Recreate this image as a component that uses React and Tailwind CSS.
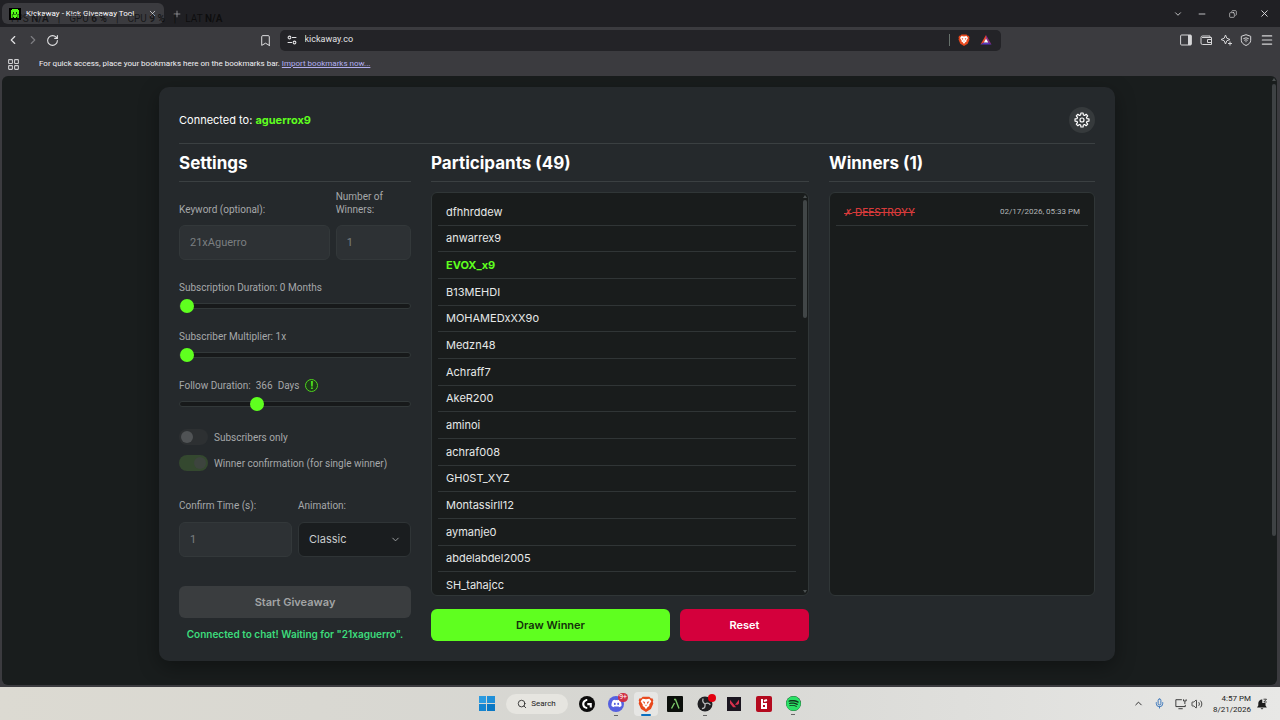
import React, { useState } from 'react';
import {
  Bookmark, ChevronDown, ChevronLeft, ChevronRight, ChevronUp, Copy, LayoutGrid,
  Menu, Mic, Minus, Plus, RotateCw, Search, Volume2, X,
} from 'lucide-react';
import { FaDiscord, FaSpotify } from 'react-icons/fa';
import { SiValorant, SiLogitechg } from 'react-icons/si';

const participants = [
  { name: 'dfhhrddew' },
  { name: 'anwarrex9' },
  { name: 'EVOX_x9', subscriber: true },
  { name: 'B13MEHDI' },
  { name: 'MOHAMEDxXX9o' },
  { name: 'Medzn48' },
  { name: 'Achraff7' },
  { name: 'AkeR200' },
  { name: 'aminoi' },
  { name: 'achraf008' },
  { name: 'GH0ST_XYZ' },
  { name: 'Montassirll12' },
  { name: 'aymanje0' },
  { name: 'abdelabdel2005' },
  { name: 'SH_tahajcc' },
];

// Eight-toothed cog outline, two inner and two outer points per tooth
const cogPoints = Array.from({ length: 8 }, (_, i) => i * 45)
  .flatMap((a) => [[a - 15, 7.8], [a - 9, 10.6], [a + 9, 10.6], [a + 15, 7.8]])
  .map(([deg, r]) => {
    const rad = (deg * Math.PI) / 180;
    return `${12 + r * Math.cos(rad)},${12 + r * Math.sin(rad)}`;
  })
  .join(' ');

const CogIcon = () => (
  <svg viewBox="0 0 24 24" className="w-4 h-4" fill="none" stroke="currentColor" strokeWidth="1.8" strokeLinejoin="round">
    <polygon points={cogPoints} />
    <circle cx="12" cy="12" r="3" />
  </svg>
);

const BraveLogo = ({ className }) => (
  <svg viewBox="0 0 24 24" className={className}>
    <path fill="#e8481c" d="M7 1h10l2.5 2.6 2-.3L23 6.5l-.8 2.3.8 2.4-3.6 8.3L12 24l-7.4-4.5L1 11.2l.8-2.4L1 6.5l1.5-3.2 2 .3z" />
    <path fill="#fff" d="M12 5l5-1 3 4-3.2 5 .2 2-2.5 1.5L12 20l-2.5-3.5L7 15l.2-2L4 8l3-4z" />
    <path fill="#e8481c" d="M7 8l3.5 1-.8 3.5L12 14l2.3-1.5-.8-3.5L17 8l-3.3 5.2L12 15.5l-1.7-2.3z" />
  </svg>
);

const BatLogo = () => (
  <svg viewBox="0 0 24 22" className="w-3 h-3">
    <path fill="#e8452c" d="M12 1L1 20l7-4 4-8z" />
    <path fill="#8b2a86" d="M12 1l11 19-7-4-4-8z" />
    <path fill="#5a36c4" d="M1 20h22l-7-4H8z" />
    <path fill="#fff" d="M12 8l4.5 8h-9z" />
  </svg>
);

const KickawayIcon = () => (
  <svg viewBox="0 0 12 12" className="w-3 h-3 shrink-0">
    <rect width="12" height="12" fill="#000" />
    <path fill="#53fc18" d="M3 1h6v1h1v8H8V9H7v1H5V9H4v1H2V2h1z" />
    <path fill="#0b3a04" d="M4 4h1v2H4zM7 4h1v2H7z" />
  </svg>
);

const ScrollArrow = ({ className }) => (
  <svg viewBox="0 0 4 3" className={className}><path d="M2 0l2 3H0z" fill="#4a4f50" /></svg>
);

const TabStrip = () => (
  <header className="relative flex items-center justify-between h-[27px] bg-[#202024] text-[#dedee0]">
    <div className="flex items-center gap-2">
      <div className="flex items-center gap-[5px] w-[162px] h-[21px] ml-[2px] px-[7px] rounded-md bg-[#3b3b3f]">
        <KickawayIcon />
        <span className="flex-1 whitespace-nowrap text-[8px] text-white">Kickaway - Kick Giveaway Tool</span>
        <button aria-label="Close tab"><X size={9} /></button>
      </div>
      <button aria-label="New tab"><Plus size={10} className="text-[#9a9a9e]" /></button>
    </div>
    <div className="absolute left-[11px] top-3 flex gap-[9px] text-[10px] leading-[14px] text-black/60 whitespace-nowrap pointer-events-none">
      <span>FPS <b>N/A</b></span><span>|</span>
      <span>GPU <b>6 %</b></span><span>|</span>
      <span>CPU <b>9 %</b></span><span>|</span>
      <span>LAT <b>N/A</b></span>
    </div>
    <div className="flex items-center gap-[22px] pr-[10px]">
      <div className="flex items-center gap-[14px]">
        <button aria-label="Search tabs"><ChevronDown size={10} /></button>
        <button aria-label="Minimize"><Minus size={10} /></button>
      </div>
      <button aria-label="Restore"><Copy size={8} className="-scale-x-100" /></button>
      <button aria-label="Close"><X size={11} /></button>
    </div>
  </header>
);

const Toolbar = () => (
  <nav className="flex items-center justify-between h-[26px] px-[6px] bg-[#3b3b3f] text-[#e2e2e4]">
    <div className="flex items-center gap-[6px]">
      <button aria-label="Back"><ChevronLeft size={14} /></button>
      <button aria-label="Forward"><ChevronRight size={14} className="text-[#7d7d81]" /></button>
      <button aria-label="Reload"><RotateCw size={13} /></button>
    </div>
    <div className="flex items-center gap-2 w-[742px] ml-[20px]">
      <button aria-label="Bookmark this page"><Bookmark size={13} strokeWidth={1.8} /></button>
      <div className="flex flex-1 items-center gap-2 h-[21px] px-[7px] rounded-[5px] bg-[#232327]">
        <svg viewBox="0 0 16 16" className="w-[10px] h-[10px]" fill="none" stroke="currentColor" strokeWidth="1.7">
          <circle cx="4" cy="4" r="2.2" /><path d="M8 4h7M1 12h7" /><circle cx="12" cy="12" r="2.2" />
        </svg>
        <input aria-label="Address" defaultValue="kickaway.co" className="flex-1 bg-transparent text-[9px] outline-none" />
        <span className="w-px h-3 bg-[#66706b]" />
        <BraveLogo className="w-3 h-3" />
        <span className="px-[2px]"><BatLogo /></span>
      </div>
    </div>
    <div className="flex items-center gap-2 text-[#d6d6d8]">
      <button aria-label="Sidebar">
        <svg viewBox="0 0 12 12" className="w-3 h-3"><rect x=".6" y="1" width="10.8" height="10" rx="1" fill="none" stroke="currentColor" /><path fill="currentColor" d="M8 1h3v10H8z" /></svg>
      </button>
      <button aria-label="Wallet">
        <svg viewBox="0 0 12 12" className="w-3 h-3" fill="none" stroke="currentColor"><path d="M10 3.5V2H2.5a1.5 1.5 0 0 0-1.5 1.5V9a1.5 1.5 0 0 0 1.5 1.5h9v-7H2M11.5 5.5h-4v3h4" /></svg>
      </button>
      <button aria-label="Leo AI">
        <svg viewBox="0 0 12 12" className="w-3 h-3" fill="none" stroke="currentColor"><path strokeLinejoin="round" d="M5.5 1L6.8 4.2 10 5.5 6.8 6.8 5.5 10 4.2 6.8 1 5.5 4.2 4.2z" /><path d="M10 7.5v4M8 9.5h4" /></svg>
      </button>
      <button aria-label="VPN">
        <svg viewBox="0 0 12 12" className="w-3 h-3" fill="none" stroke="currentColor"><path d="M6 .7l4.7 1.6v4c0 2.5-2 4-4.7 5.2C3.3 10.3 1.3 8.8 1.3 6.3v-4z" /><path d="M3.3 4.7q2.7-1.8 5.4 0M4.3 6.3q1.7-1 3.4 0M6 7.2v1" /></svg>
      </button>
      <button aria-label="Menu"><Menu size={14} /></button>
    </div>
  </nav>
);

const BookmarksBar = () => (
  <div className="flex items-center h-[23px] px-[7px] bg-[#3b3b3f] text-[#f2f2f4] text-[8px] whitespace-nowrap">
    <LayoutGrid size={13} className="mr-[19px] text-[#cfcfd1]" />
    <span className="pb-px">
      For quick access, place your bookmarks here on the bookmarks bar.{' '}
      <a href="#import" className="underline text-[#b3b0f2]">Import bookmarks now...</a>
    </span>
  </div>
);

const ColumnTitle = ({ children }) => (
  <h2 className="h-[38px] mb-[10px] border-b border-[#3b4042] text-[17px] leading-[38px] font-bold text-white">{children}</h2>
);

const Slider = ({ id, label, max, initial, children }) => {
  const [value, setValue] = useState(initial);

  return (
    <div className="flex flex-col gap-1 h-[49px]">
      <label htmlFor={id} className="flex items-center h-4">{label(value)}{children}</label>
      <input
        id={id}
        type="range"
        min={0}
        max={max}
        value={value}
        onChange={(e) => setValue(Number(e.target.value))}
        className="w-full h-[14px] appearance-none bg-transparent [&::-webkit-slider-runnable-track]:h-[6px] [&::-webkit-slider-runnable-track]:rounded-full [&::-webkit-slider-runnable-track]:border [&::-webkit-slider-runnable-track]:border-[#323839] [&::-webkit-slider-runnable-track]:bg-[#17191a] [&::-webkit-slider-thumb]:appearance-none [&::-webkit-slider-thumb]:w-[14px] [&::-webkit-slider-thumb]:h-[14px] [&::-webkit-slider-thumb]:-mt-[5px] [&::-webkit-slider-thumb]:rounded-full [&::-webkit-slider-thumb]:bg-[#5fff1f]"
      />
    </div>
  );
};

const Toggle = ({ label, defaultChecked }) => (
  <label className="flex items-center gap-[6px] h-[26px]">
    <input
      type="checkbox"
      defaultChecked={defaultChecked}
      disabled
      className="appearance-none w-[29px] h-4 px-[2px] rounded-full bg-[#2d3032] checked:bg-[#34482f] before:block before:w-3 before:h-3 before:mt-[2px] before:rounded-full before:bg-[#505355] checked:before:ml-[13px] checked:before:bg-[#3d443e]"
    />
    {label}
  </label>
);

const fieldClass = 'w-full h-[35px] px-[10px] rounded-md border border-[#33383a] bg-[#2d3134] text-[11px] text-[#7b7f81] outline-none';

const Settings = () => (
  <section className="font-[Roboto,sans-serif] text-[10px] leading-[13px] text-[#a5a8aa]">
    <div className="font-[Inter,sans-serif]">
      <ColumnTitle>Settings</ColumnTitle>
    </div>
    <div className="grid grid-cols-[2fr_1fr] items-end gap-x-[6px] gap-y-[9px] -mt-[2px] mb-[19px]">
      <label htmlFor="keyword">Keyword (optional):</label>
      <label htmlFor="count">Number of Winners:</label>
      <input id="keyword" defaultValue="21xAguerro" disabled className={fieldClass} />
      <input id="count" defaultValue="1" disabled className={fieldClass} />
    </div>

    <Slider id="sub-duration" max={12} initial={0} label={(v) => `Subscription Duration: ${v} Months`} />
    <Slider id="multiplier" max={9} initial={0} label={(v) => `Subscriber Multiplier: ${v + 1}x`} />
    <Slider
      id="follow"
      max={1124}
      initial={366}
      label={(v) => <>Follow Duration:<span className="mx-[5px]">{v}</span>Days</>}
    >
      <span className="flex items-center justify-center w-[13px] h-[13px] ml-[6px] rounded-full border border-[#4fd31e] bg-[#1d3a1a] text-[10px] font-bold text-[#5fff1f]">!</span>
    </Slider>

    <div className="-mt-[2px]">
      <Toggle label="Subscribers only" />
      <Toggle label="Winner confirmation (for single winner)" defaultChecked />
    </div>

    <div className="grid grid-cols-2 gap-x-[6px] gap-y-[10px] mt-[23px] mb-[29px]">
      <label htmlFor="confirm">Confirm Time (s):</label>
      <label htmlFor="animation">Animation:</label>
      <input id="confirm" defaultValue="1" disabled className={fieldClass} />
      <div className="relative">
        <select id="animation" className="appearance-none w-full h-[35px] px-[10px] rounded-md border border-[#2f3436] bg-[#1a1d1f] font-[Inter,sans-serif] text-[11px] text-[#c9cccd]">
          <option>Classic</option>
        </select>
        <ChevronDown size={11} className="absolute right-[10px] top-3 pointer-events-none" />
      </div>
    </div>

    <div className="font-[Inter,sans-serif] font-semibold">
      <button disabled className="w-full h-8 rounded-md bg-[#3a3d3f] text-[11px] text-[#a3a5a6]">Start Giveaway</button>
      <p className="mt-[10px] text-center text-[#3ddc7c] whitespace-nowrap">
        Connected to chat! Waiting for &quot;21xaguerro&quot;.
      </p>
    </div>
  </section>
);

const Participants = () => (
  <section>
    <ColumnTitle>Participants (49)</ColumnTitle>
    <div className="flex h-[404px] pl-[6px] pt-[6px] rounded-md border border-[#303637] bg-[#191c1c] overflow-hidden">
      <ul className="flex-1 grid auto-rows-fr h-[400px] text-[11px] text-[#e6e8e8]">
        {participants.map((p) => (
          <li
            key={p.name}
            className={p.subscriber
              ? 'flex items-center px-2 border-b border-[#303536] font-bold text-[#5fff1f]'
              : 'flex items-center px-2 border-b border-[#303536]'}
          >
            {p.name}
          </li>
        ))}
      </ul>
      <div className="flex flex-col items-start w-[5px] ml-[7px] -mt-1 pb-[2px]">
        <ScrollArrow className="w-1 h-[3px]" />
        <div className="w-1 h-[118px] mt-[2px] rounded-full bg-[#414647]" />
        <ScrollArrow className="w-1 h-[3px] mt-auto rotate-180" />
      </div>
    </div>
    <div className="flex gap-[10px] mt-[13px] text-[11px] font-semibold">
      <button className="flex-1 h-8 rounded-md bg-[#5fff1f] text-[#14300b]">Draw Winner</button>
      <button className="w-[129px] h-8 rounded-md bg-[#d4003c] text-white">Reset</button>
    </div>
  </section>
);

const Winners = () => (
  <section>
    <ColumnTitle>Winners (1)</ColumnTitle>
    <div className="h-[404px] px-[6px] pt-[6px] rounded-md border border-[#303637] bg-[#191c1c]">
      <div className="flex items-center justify-between h-[27px] px-2 border-b border-[#303536]">
        <span className="text-[10px] font-medium text-[#d63a3a] line-through"><span className="font-['DejaVu_Sans',sans-serif]">✗</span> DEESTROYY</span>
        <time className="font-[Roboto,sans-serif] text-[8px] text-[#b4b7b8]">02/17/2026, 05:33 PM</time>
      </div>
    </div>
  </section>
);

const Taskbar = () => (
  <footer className="grid grid-cols-[1fr_auto_1fr] items-center h-[33px] bg-linear-to-r from-[#dcdad2] via-[#d6d6d2] to-[#e8e8e6] text-[#222]">
    <div />
    <div className="flex items-center gap-[9px]">
      <button aria-label="Start" className="grid grid-cols-2 gap-px w-5 px-[2px]">
        <i className="h-[7px] bg-[#2b9be0]" /><i className="h-[7px] bg-[#1f8fd8]" />
        <i className="h-[7px] bg-[#1585d0]" /><i className="h-[7px] bg-[#0a78c4]" />
      </button>
      <button className="flex items-center justify-center gap-1 w-[62px] h-5 rounded-full bg-[#e6e5e0] text-[8px]">
        <Search size={10} /> Search
      </button>
      <div className="flex items-center justify-between w-[227px]">
        <button aria-label="G HUB" className="flex justify-center w-5"><span className="flex items-center justify-center w-4 h-4 rounded-full bg-[#0c0c0c] text-white"><SiLogitechg size={10} /></span></button>
        <button aria-label="Discord" className="relative flex justify-center w-5">
          <span className="flex items-center justify-center w-4 h-4 rounded-full bg-[#5560e0] text-white"><FaDiscord size={11} /></span>
          <span className="absolute -top-[3px] -right-[2px] px-[1px] rounded-full bg-[#cf2f45] text-[7px] leading-[9px] text-white">9+</span>
          <span className="absolute -bottom-1 w-1 h-px bg-[#666]" />
        </button>
        <button aria-label="Brave" className="relative flex items-center justify-center w-6 h-6 -mx-[2px] rounded-sm bg-white/40">
          <BraveLogo className="w-4 h-4" />
          <span className="absolute bottom-0 w-[10px] h-[2px] rounded-full bg-[#0a6fc0]" />
        </button>
        <button aria-label="Aimlabs" className="flex justify-center w-5">
          <svg viewBox="0 0 16 16" className="w-4 h-4"><rect width="16" height="16" rx="1" fill="#0b0f0b" /><path d="M7 3.5h1.5L12 12.5M4.500 12.500L7.500 7" fill="none" stroke="#7cc86a" strokeWidth="1.4" /></svg>
        </button>
        <button aria-label="OBS" className="relative flex justify-center w-5">
          <svg viewBox="0 0 16 16" className="w-4 h-4">
            <circle cx="8" cy="8" r="7.5" fill="#1f1f22" />
            <path d="M6 3q-1 3 2 5M13 8.5q-2-2.5-5-.5M5.500 12.500q3 0 2.500-4.500" fill="none" stroke="#b9b9bc" strokeWidth="1.3" strokeLinecap="round" />
          </svg>
          <span className="absolute -top-[2px] -right-[1px] w-2 h-2 rounded-full bg-[#e3000f]" />
          <span className="absolute -bottom-1 w-1 h-px bg-[#666]" />
        </button>
        <button aria-label="Valorant" className="flex justify-center w-5"><span className="flex items-center justify-center w-[14px] h-[14px] bg-[#1b1620] text-[#d8324e]"><SiValorant size={9} /></span></button>
        <button aria-label="Riot" className="flex justify-center w-5">
          <svg viewBox="0 0 16 16" className="w-4 h-4"><rect width="16" height="16" rx="2" fill="#b40a1e" /><path d="M6 3v10M6 8h4v4H6M8 5l3-1" fill="none" stroke="#fff" strokeWidth="2" /></svg>
        </button>
        <button aria-label="Spotify" className="relative flex justify-center w-5">
          <span className="rounded-full bg-[#10331c]"><FaSpotify size={15} className="text-[#2be066]" /></span>
          <span className="absolute -bottom-1 w-1 h-px bg-[#666]" />
        </button>
      </div>
    </div>
    <div className="flex items-center justify-end pr-3">
      <ChevronUp size={11} />
      <Mic size={11} className="ml-[10px] text-[#2f6fb8]" />
      <svg viewBox="0 0 14 14" className="w-3 h-3 ml-[10px]" fill="none" stroke="currentColor"><path d="M8 2H1v8h11V8M4 12.5h5M10 1.5v2h3v-2M11.5 4v3" /></svg>
      <Volume2 size={12} strokeWidth={1.6} className="ml-1" />
      <div className="ml-[10px] text-right text-[8px] leading-[11px]">
        <div>4:57 PM</div>
        <div>8/21/2026</div>
      </div>
      <svg viewBox="0 0 12 12" className="w-3 h-3 ml-[5px]"><path fill="#1b1b1b" d="M1 9.5l1.3-2V5a3.5 3.5 0 0 1 4-3.4V5H9.5v2.5l1.3 2zM4.500 10.200h3L6 11.500z" /><path d="M7.5 1.200h3L7.800 4h3" fill="none" stroke="#1b1b1b" strokeWidth=".8" /></svg>
    </div>
  </footer>
);

const App = () => (
  <div className="flex flex-col h-screen overflow-hidden bg-[#3b3b3f] font-[Roboto,sans-serif]">
    <TabStrip />
    <Toolbar />
    <BookmarksBar />
    <div className="flex flex-1 min-h-0 ml-[2px] mr-[3px] mb-[2px] rounded-md bg-[#191d1d] font-[Inter,sans-serif] overflow-hidden">
      <main className="flex-1 pt-[11px]">
        <div className="max-w-[956px] mx-auto p-5 rounded-[10px] bg-[#25292c] shadow-[0_6px_20px_rgba(0,0,0,0.35)]">
          <div className="flex items-center justify-between pb-[10px] border-b border-[#3b4042]">
            <p className="text-[11px] text-white">Connected to: <span className="font-bold text-[#5fff1f]">aguerrox9</span></p>
            <button aria-label="Options" className="flex items-center justify-center w-[26px] h-[26px] rounded-full bg-[#363a3c] text-white">
              <CogIcon />
            </button>
          </div>
          <div className="grid grid-cols-[232px_minmax(0,1fr)_266px] gap-5">
            <Settings />
            <Participants />
            <Winners />
          </div>
        </div>
      </main>
      <div className="w-[5px] pt-[2px]">
        <ScrollArrow className="w-1 h-[3px]" />
        <div className="w-1 h-[452px] mt-[3px] rounded-full bg-[#3e4244]" />
      </div>
    </div>
    <Taskbar />
  </div>
);

export default App;
